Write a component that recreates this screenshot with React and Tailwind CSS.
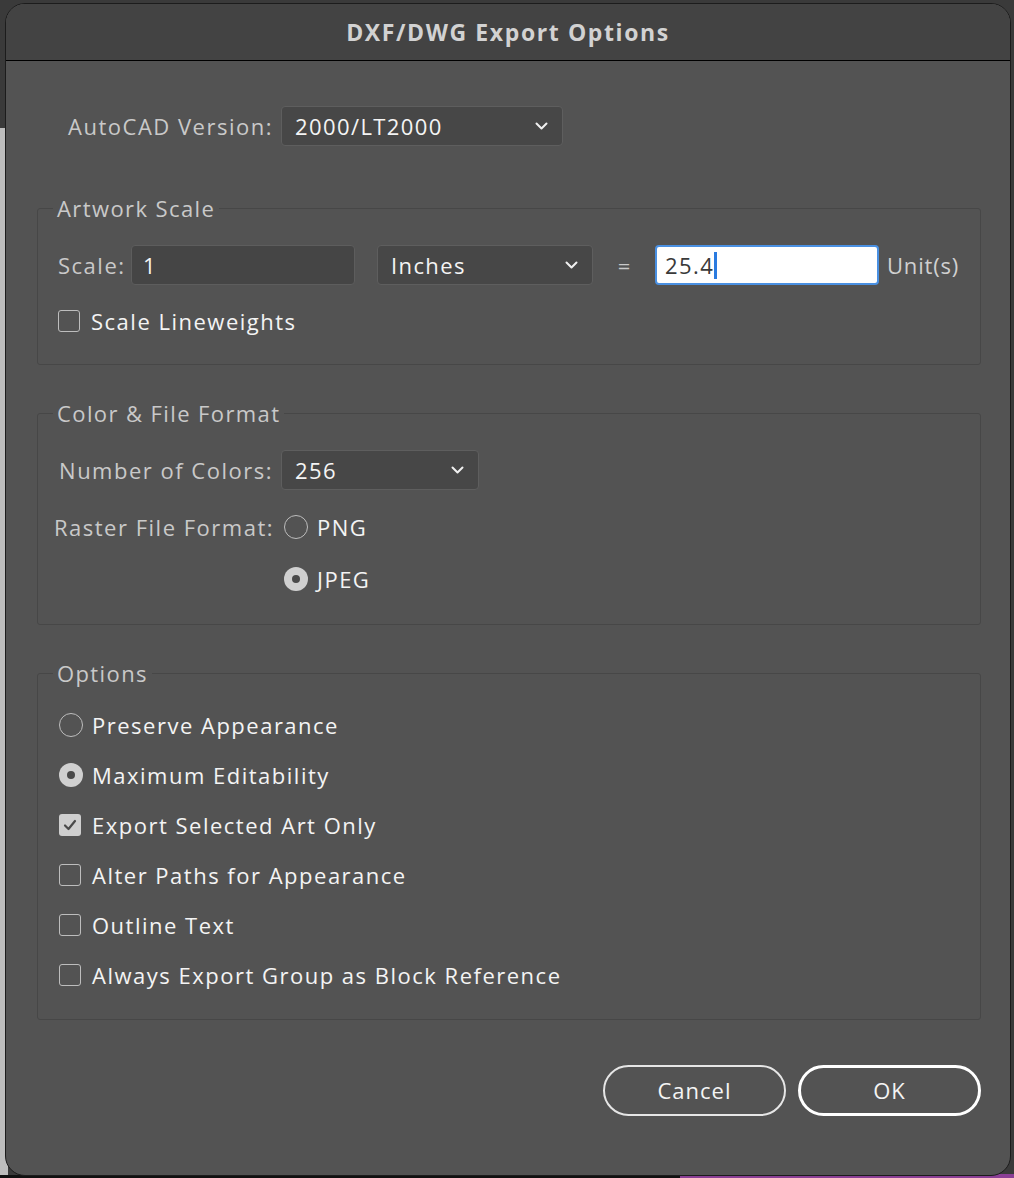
import React from 'react';

const font = { fontFamily: '"Open Sans", "Noto Sans", sans-serif' };

const Chevron = () => (
  <svg width="13" height="8" viewBox="0 0 13 8" fill="none">
    <polyline points="1.5,1.5 6.5,6.5 11.5,1.5" stroke="#f0f0f0" strokeWidth="2" strokeLinecap="round" strokeLinejoin="round" />
  </svg>
);

const Select = ({ value, width }) => (
  <div className={`${width} h-[40px] flex items-center justify-between pl-[13px] pr-[14px] bg-[#474747] border border-[#5e5e5e] rounded-[4px]`}>
    <span className="text-[22px] tracking-[1.4px] font-medium text-[#f4f4f4]">{value}</span>
    <Chevron />
  </div>
);

const Checkbox = ({ checked, label }) => (
  <div className="h-[30px] flex items-center gap-[11px]">
    {checked ? (
      <div className="w-[22px] h-[22px] rounded-[3px] bg-[#cfcfcf] flex items-center justify-center">
        <svg width="14" height="12" viewBox="0 0 14 12" fill="none">
          <polyline points="2,6.5 5.5,10 12,2" stroke="#4a4a4a" strokeWidth="2.2" strokeLinecap="round" strokeLinejoin="round" />
        </svg>
      </div>
    ) : (
      <div className="w-[22px] h-[22px] rounded-[3px] border-[1.5px] border-[#bdbdbd]" />
    )}
    <span className="text-[22px] tracking-[1.5px] font-medium text-[#f4f4f4]">{label}</span>
  </div>
);

const Radio = ({ checked, label }) => (
  <div className="h-[30px] flex items-center gap-[9px]">
    {checked ? (
      <div className="w-[24px] h-[24px] rounded-full bg-[#d0d0d0] flex items-center justify-center">
        <div className="w-[8px] h-[8px] rounded-full bg-[#4a4a4a]" />
      </div>
    ) : (
      <div className="w-[24px] h-[24px] rounded-full border-[1.5px] border-[#bdbdbd]" />
    )}
    <span className="text-[22px] tracking-[1.5px] font-medium text-[#f4f4f4]">{label}</span>
  </div>
);

const Group = ({ title, className, children }) => (
  <fieldset className={`min-w-0 border border-[#474747] rounded-[3px] px-[20px] ${className}`}>
    <legend className="-ml-[5px] px-[4px] text-[22px] leading-[30px] tracking-[1.4px] font-medium text-[#c9c9c9]">{title}</legend>
    {children}
  </fieldset>
);

const Label = ({ className, children }) => (
  <span className={`text-[22px] tracking-[1.5px] font-medium text-[#c9c9c9] whitespace-nowrap ${className}`}>{children}</span>
);

export default function App() {
  return (
    <div className="relative w-[1014px] h-[1178px] bg-[#3a3a3a] overflow-hidden" style={font}>
      <div className="absolute left-0 top-[128px] w-[8px] h-[1050px] bg-[#bdbdbd]" />
      <div className="absolute left-0 top-[1175px] w-[1014px] h-[3px] bg-[#111]" />
      <div className="absolute left-[680px] top-[1174px] w-[334px] h-[4px] bg-[#8b3f95]" />

      <div className="absolute left-[5px] top-[3px] w-[1006px] h-[1173px] rounded-[20px] border border-[#1c1c1c] bg-[#535353] overflow-hidden flex flex-col">
        <div className="h-[57px] shrink-0 bg-[#434343] border-b border-black flex items-center justify-center">
          <span className="text-[23px] font-bold text-[#d2d2d2] tracking-[1.6px]">DXF/DWG Export Options</span>
        </div>

        <div className="flex-1 pl-[31px] pr-[29px] pt-[45px] flex flex-col">
          <div className="flex items-center gap-[8px]">
            <Label className="w-[236px] text-right">AutoCAD Version:</Label>
            <Select value="2000/LT2000" width="w-[282px]" />
          </div>

          <Group title="Artwork Scale" className="mt-[47px] pb-[28px]">
            <div className="mt-[22px] flex items-center">
              <Label className="w-[65px]">Scale:</Label>
              <div className="ml-[8px] w-[224px] h-[40px] flex items-center pl-[11px] bg-[#454545] border border-[#5d5d5d] rounded-[4px]">
                <span className="text-[22px] font-medium text-[#f4f4f4]">1</span>
              </div>
              <div className="ml-[22px]">
                <Select value="Inches" width="w-[216px]" />
              </div>
              <span className="ml-[22px] w-[18px] text-center text-[22px] text-[#c9c9c9]">=</span>
              <div className="ml-[22px] w-[224px] h-[40px] flex items-center pl-[8px] bg-white border-2 border-[#4a90e2] rounded-[4px]">
                <span className="text-[22px] tracking-[1.4px] text-[#3a3a3a]">25.4</span>
                <span className="w-[3px] h-[27px] bg-[#2a7be0]" />
              </div>
              <span className="ml-[8px] text-[22px] tracking-[0.8px] font-medium text-[#d0d0d0] whitespace-nowrap">Unit(s)</span>
            </div>
            <div className="mt-[21px]">
              <Checkbox label="Scale Lineweights" />
            </div>
          </Group>

          <Group title="Color & File Format" className="mt-[33px] pb-[30px]">
            <div className="mt-[22px] flex items-center gap-[8px]">
              <Label className="w-[215px] text-right">Number of Colors:</Label>
              <Select value="256" width="w-[198px]" />
            </div>
            <div className="mt-[22px] flex items-start gap-[10px]">
              <Label className="w-[216px] h-[30px] flex items-center justify-end">Raster File Format:</Label>
              <div className="flex flex-col gap-[22px]">
                <Radio label="PNG" />
                <Radio checked label="JPEG" />
              </div>
            </div>
          </Group>

          <Group title="Options" className="mt-[33px] pb-[29px]">
            <div className="mt-[22px] flex flex-col gap-[20px] pl-[1px]">
              <Radio label="Preserve Appearance" />
              <Radio checked label="Maximum Editability" />
              <Checkbox checked label="Export Selected Art Only" />
              <Checkbox label="Alter Paths for Appearance" />
              <Checkbox label="Outline Text" />
              <Checkbox label="Always Export Group as Block Reference" />
            </div>
          </Group>

          <div className="mt-[45px] flex justify-end gap-[12px]">
            <button className="w-[183px] h-[51px] rounded-full border-2 border-[#e6e6e6] text-[22px] tracking-[1px] font-medium text-[#f4f4f4]">Cancel</button>
            <button className="w-[183px] h-[51px] rounded-full border-[3px] border-white text-[22px] tracking-[1px] font-medium text-[#f4f4f4]">OK</button>
          </div>
        </div>
      </div>
    </div>
  );
}
